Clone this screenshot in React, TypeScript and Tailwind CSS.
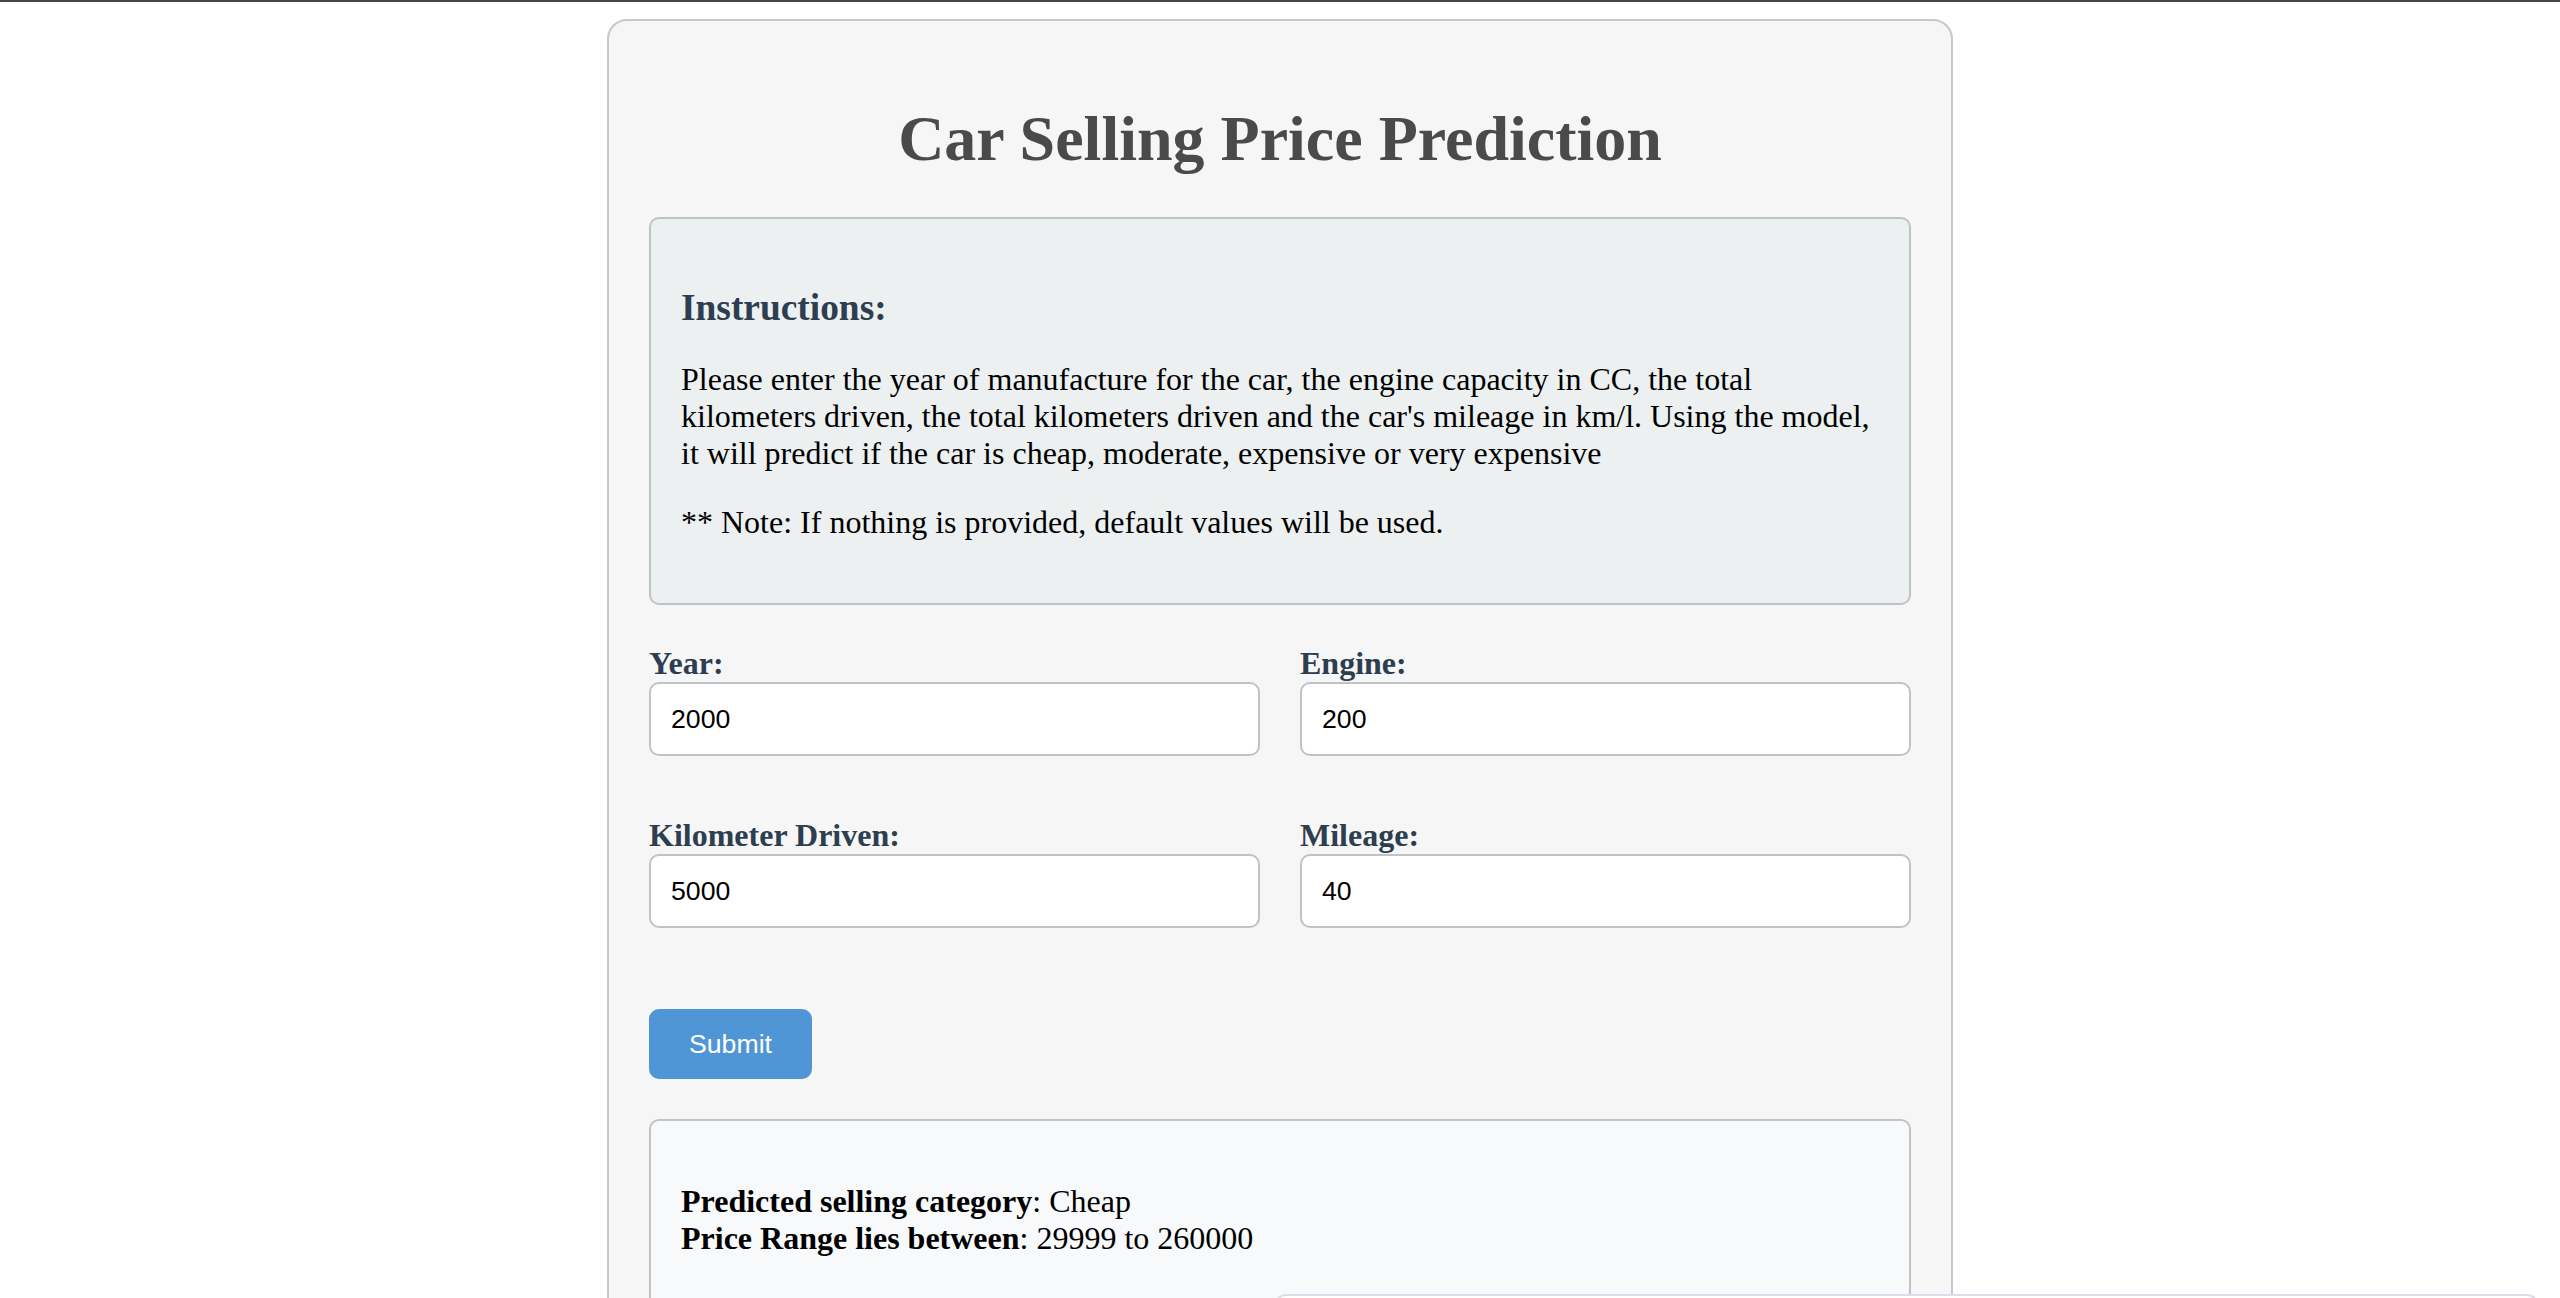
import React from "react";

const fields = [
    {label: "Year:", value: "2000"},
    {label: "Engine:", value: "200"},
    {label: "Kilometer Driven:", value: "5000"},
    {label: "Mileage:", value: "40"},
];

const App = () => {
    return (
        <div className="min-h-screen bg-white font-['Liberation_Serif',serif] text-[32px] leading-[normal] text-black">
            <div className="h-[2px] bg-[#47473f]" />

            <div className="mx-auto mt-[17px] w-[1346px] rounded-[20px] border-2 border-[#c4c8cc] bg-[#f6f6f6] px-[40px] pb-[40px] pt-[40px]">
                <h1 className="my-[41px] text-center text-[64px] font-bold text-[#4a4a4a]">
                    Car Selling Price Prediction
                </h1>

                <div className="rounded-[10px] border-2 border-[#bdc3c7] bg-[#ecf0f1] p-[30px]">
                    <h3 className="mb-[32px] mt-[37px] text-[37.4px] font-bold text-[#2c3e50]">Instructions:</h3>
                    <p className="my-[32px]">
                        Please enter the year of manufacture for the car, the engine capacity in CC, the total
                        kilometers driven, the total kilometers driven and the car's mileage in km/l. Using the model,
                        it will predict if the car is cheap, moderate, expensive or very expensive
                    </p>
                    <p className="my-[32px]">** Note: If nothing is provided, default values will be used.</p>
                </div>

                <div className="mt-[40px] grid grid-cols-2 gap-x-[40px] gap-y-[61px]">
                    {fields.map((f) => (
                        <div key={f.label} className="flex flex-col">
                            <label className="font-bold text-[#2c3e50]">{f.label}</label>
                            <input
                                type="text"
                                defaultValue={f.value}
                                className="h-[74px] w-full rounded-[10px] border-2 border-[#bdc3c7] bg-white px-[20px] font-['Liberation_Sans',Arial,sans-serif] text-[26.67px] text-black outline-none"
                            />
                        </div>
                    ))}
                </div>

                <button className="mt-[81px] h-[70px] w-[163px] rounded-[10px] bg-[#5096d6] font-['Liberation_Sans',Arial,sans-serif] text-[26.67px] text-white">
                    Submit
                </button>

                <div className="mt-[40px] rounded-[10px] border-2 border-[#bdc3c7] bg-[#f8f9fa] px-[30px] py-[30px]">
                    <p className="my-[32px]">
                        <strong>Predicted selling category</strong>: Cheap
                        <br />
                        <strong>Price Range lies between</strong>: 29999 to 260000
                    </p>
                </div>
            </div>

            <div className="fixed left-[1274px] top-[1294px] h-[40px] w-[1265px] rounded-t-[12px] border-2 border-[#dcdde8] bg-white" />
        </div>
    );
};

export default App;
